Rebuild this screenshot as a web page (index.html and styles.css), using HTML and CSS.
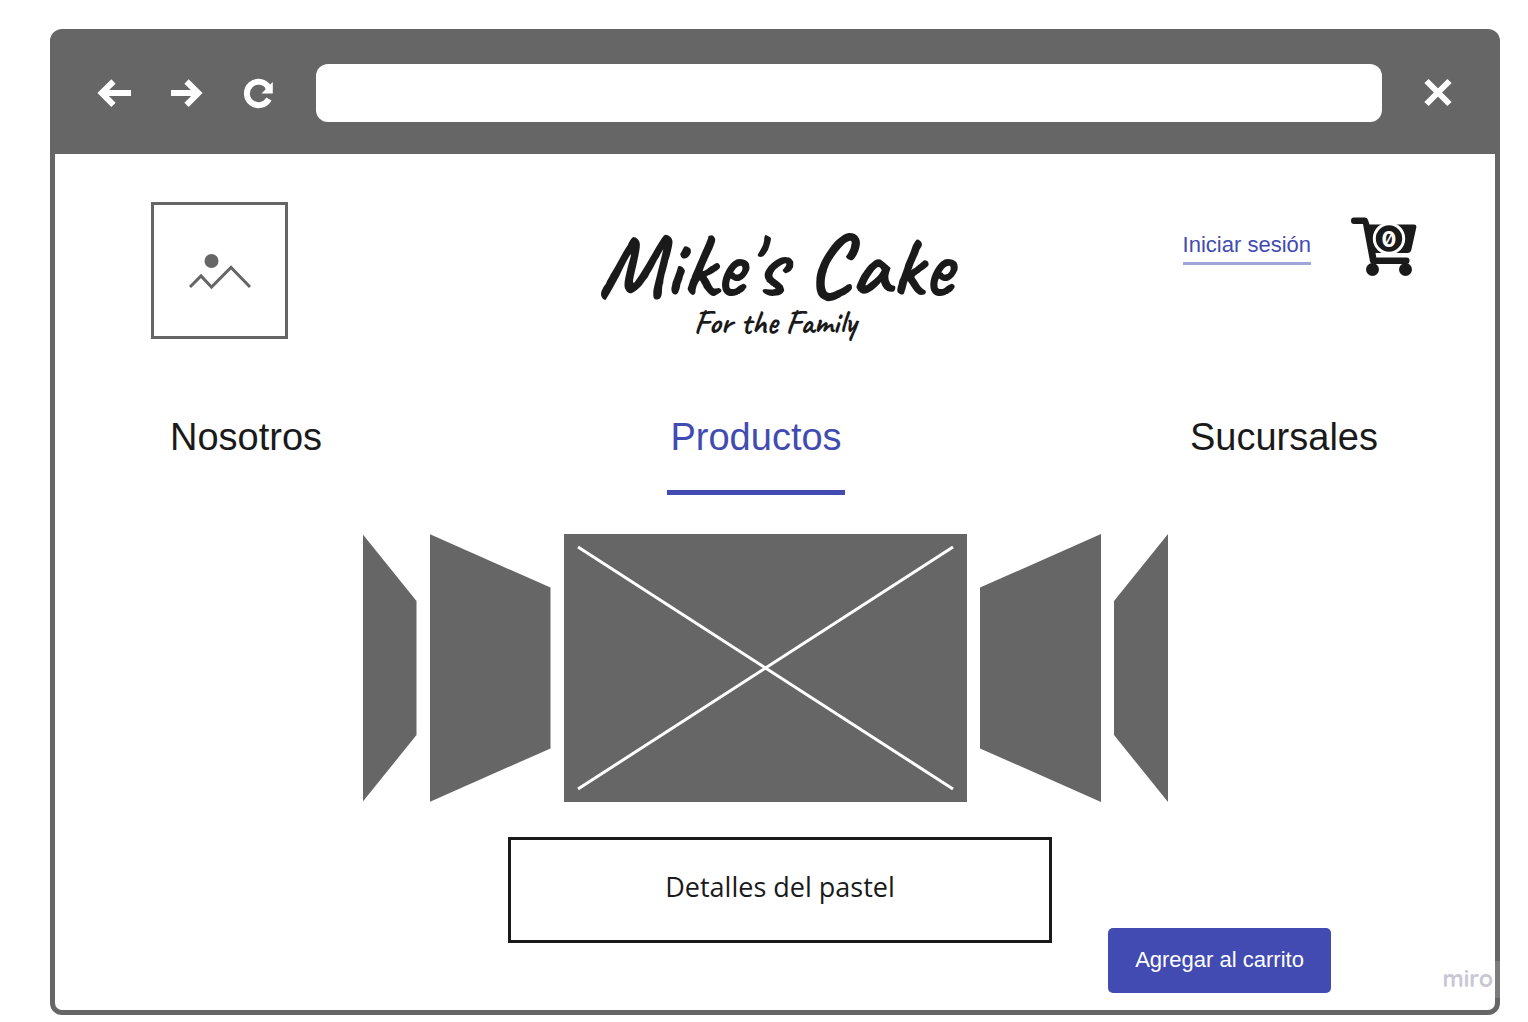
FILE: index.html
```html
<!DOCTYPE html>
<html lang="es">
<head>
<meta charset="utf-8">
<meta name="viewport" content="width=device-width, initial-scale=1">
<title>Mike's Cake</title>
<link rel="stylesheet" href="styles.css">
</head>
<body>
<div class="window">
  <div class="toolbar">
    <button class="tool" type="button" aria-label="Atrás">
      <svg viewBox="0 0 34 34"><path d="M34 17H6M16.500 5.500L4.700 17L16.500 28.800"/></svg>
    </button>
    <button class="tool" type="button" aria-label="Adelante">
      <svg viewBox="0 0 34 34"><path d="M1 17H27M16.500 5.500L28.300 17L16.500 28.800"/></svg>
    </button>
    <button class="tool" type="button" aria-label="Recargar">
      <svg viewBox="0 0 34 34"><path d="M25.500 11.200A11.700 11.700 0 1 0 25.900 23"/><path class="solid" d="M29.800 6V17.400H18.500L22.500 13.500L22 8.500L26 9.800Z"/></svg>
    </button>
    <input class="address" type="text" aria-label="Dirección">
    <button class="tool" type="button" aria-label="Cerrar">
      <svg viewBox="0 0 34 34"><path d="M5.500 5L28.500 28M28.500 5L5.500 28"/></svg>
    </button>
  </div>

  <header class="header">
    <svg class="placeholder" viewBox="0 0 137 137" role="img" aria-label="Logotipo">
      <rect x="1.500" y="1.500" width="134" height="134"/>
      <path d="M39 85L50 74L60.500 85L80 65.500L99 85"/>
      <circle cx="60.500" cy="59" r="7"/>
    </svg>
    <div class="brand">
      <h1 class="brand-name">Mike's Cake</h1>
      <p class="brand-tag">For the Family</p>
    </div>
    <div class="account">
      <a class="login" href="#">Iniciar sesión</a>
      <a class="cart" href="#" aria-label="Carrito">
        <svg viewBox="0 0 66 60">
          <path d="M3 .500H14Q16.500 .500 17 3L18.500 7.500H63Q66 7.500 65.300 10.500L60.300 33Q59.500 36 56.500 36H24.500L25.300 40.500H55.500Q58.500 40.500 58.500 43.500Q58.500 47 55.500 47H22Q19.500 47 19 44.500L12 7H3Q0 7 0 3.800Q0 .500 3 .500Z"/>
          <circle cx="21.500" cy="52.500" r="6.500"/>
          <circle cx="54.500" cy="52.500" r="6.500"/>
          <circle class="ring" cx="38" cy="21.500" r="14.700"/>
          <text class="count" x="38" y="29.500" text-anchor="middle">0</text>
        </svg>
      </a>
    </div>
  </header>

  <nav class="nav">
    <a class="tab" href="#">Nosotros</a>
    <a class="tab tab-active" href="#" aria-current="page">Productos</a>
    <a class="tab" href="#">Sucursales</a>
  </nav>

  <main>
    <div class="carousel">
      <div class="slide slide-far"></div>
      <div class="slide slide-near"></div>
      <svg class="slide-main" viewBox="0 0 403 268" role="img" aria-label="Pastel">
        <path d="M14 13L389 255M389 13L14 255"/>
      </svg>
      <div class="slide slide-near flip"></div>
      <div class="slide slide-far flip"></div>
    </div>
    <div class="purchase">
      <section class="details">Detalles del pastel</section>
      <button class="add" type="button">Agregar al carrito</button>
    </div>
  </main>
  <span class="watermark">miro</span>
</div>
</body>
</html>
```
FILE: styles.css
```css
* { box-sizing: border-box; }

:root {
  --gray: #666;
  --ink: #1a1a1a;
  --blue: #424bb2;
}

body {
  margin: 0;
  padding: 29px 28px 7px 50px;
  background: #fff;
  color: var(--ink);
  font-family: "Liberation Sans", Arial, sans-serif;
}

.window {
  position: relative;
  border: 5px solid var(--gray);
  border-radius: 12px;
}

a { color: inherit; text-decoration: none; }

/* Browser bar */
.toolbar {
  display: flex;
  align-items: center;
  gap: 39px;
  height: 120px;
  padding: 0 40px 2px 42px;
  background: var(--gray);
}
.tool {
  flex: none;
  width: 34px;
  height: 34px;
  padding: 0;
  border: 0;
  background: none;
}
.tool svg { display: block; fill: none; stroke: #fff; stroke-width: 6; }
.tool .solid { fill: #fff; stroke: none; }
.address {
  flex: 1;
  min-width: 0;
  height: 58px;
  padding: 0 20px;
  border: 0;
  border-radius: 12px;
  background: #fff;
  font: 22px "Liberation Sans", Arial, sans-serif;
}

/* Header */
.header {
  display: grid;
  grid-template-columns: 1fr auto 1fr;
  align-items: start;
  padding: 48px 78px 0 96px;
}
.placeholder {
  width: 137px;
  height: 137px;
  fill: none;
  stroke: var(--gray);
  stroke-width: 3;
}
.placeholder circle { fill: var(--gray); stroke: none; }
.brand {
  margin-right: 18px;
  padding-top: 24px;
  text-align: center;
  font-family: Caveat, cursive;
}
.brand-name { margin: 0; font-size: 89px; line-height: 80px; font-weight: 700; }
.brand-tag { margin: 0; font-size: 33px; line-height: 32px; font-weight: 700; }
.account {
  display: flex;
  justify-content: flex-end;
  align-items: flex-start;
  gap: 40px;
  padding-top: 15px;
}
.login {
  margin-top: 14px;
  padding: 0 0 3px;
  border-bottom: 3px solid #a0a5d9;
  color: var(--blue);
  font-size: 22px;
  line-height: 28px;
  white-space: nowrap;
}
.cart svg { display: block; width: 66px; height: 60px; fill: var(--ink); }
.cart .ring { stroke: #fff; stroke-width: 3; }
.cart .count {
  fill: #fff;
  font: 700 22px Inter, sans-serif;
  font-feature-settings: "zero";
}

/* Navigation */
.nav {
  display: flex;
  justify-content: space-between;
  padding: 76px 114px 0 112px;
}
.tab {
  padding: 0 3px 31px;
  border-bottom: 5px solid transparent;
  font-size: 38px;
  line-height: 44px;
}
.tab-active { border-color: var(--blue); color: var(--blue); }

/* Product carousel */
.carousel {
  display: flex;
  justify-content: center;
  gap: 13px;
  height: 268px;
  margin-top: 39px;
  padding-right: 20px;
}
.slide { background: var(--gray); }
.slide-far { width: 54px; clip-path: polygon(0 0, 100% 25%, 100% 75%, 0 100%); }
.slide-near { width: 121px; clip-path: polygon(0 0, 100% 20%, 100% 80%, 0 100%); }
.flip { transform: scaleX(-1); }
.slide-main {
  width: 403px;
  background: var(--gray);
  stroke: #fff;
  stroke-width: 3;
}

/* Details and purchase */
.purchase {
  display: grid;
  grid-template-columns: 1fr 544px 1fr;
  min-height: 156px;
  margin: 35px 0 17px;
  padding-left: 10px;
}
.details {
  grid-column: 2;
  display: flex;
  align-items: center;
  justify-content: center;
  height: 106px;
  padding-bottom: 8px;
  border: 3px solid var(--ink);
  font-family: "Open Sans", sans-serif;
  font-size: 27px;
}
.add {
  align-self: end;
  justify-self: start;
  width: 223px;
  height: 65px;
  margin-left: 56px;
  padding: 0 0 2px;
  border: 0;
  border-radius: 5px;
  background: var(--blue);
  color: #fff;
  font: 22px "Liberation Sans", Arial, sans-serif;
}

/* Watermark laid over the window's corner */
.watermark {
  position: absolute;
  right: -5px;
  bottom: 12px;
  padding: 0 7px 1px;
  background: rgba(255, 255, 255, .15);
  color: #c9c7d3;
  font: 700 23px/36px Quicksand, Lato, sans-serif;
}
```
